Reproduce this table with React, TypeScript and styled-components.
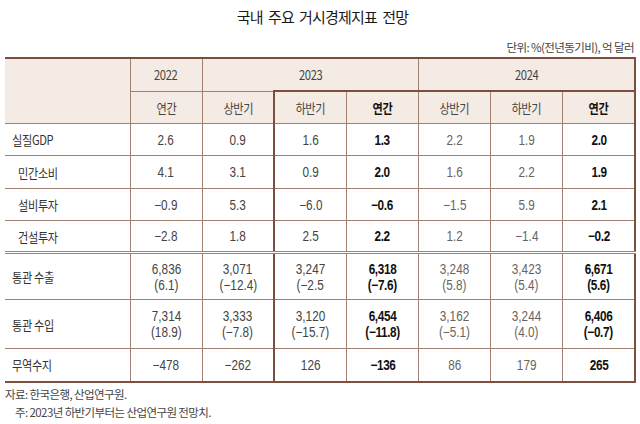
import React from "react";
import styled, { createGlobalStyle } from "styled-components";

const GlobalStyle = createGlobalStyle`
  html, body {
    margin: 0;
    padding: 0;
    background: #ffffff;
  }
  body {
    font-family: "Noto Sans CJK KR", "Noto Sans", sans-serif;
  }
`;

const THIN = "#a08070";
const THICK = "#7b4e3e";

type Row = {
  label: string;
  indent?: boolean;
  values: string[][];
  double?: boolean;
  height: number;
};

const rows: Row[] = [
  { label: "실질GDP", values: [["2.6"], ["0.9"], ["1.6"], ["1.3"], ["2.2"], ["1.9"], ["2.0"]], height: 32 },
  { label: "민간소비", indent: true, values: [["4.1"], ["3.1"], ["0.9"], ["2.0"], ["1.6"], ["2.2"], ["1.9"]], height: 33 },
  { label: "설비투자", indent: true, values: [["−0.9"], ["5.3"], ["−6.0"], ["−0.6"], ["−1.5"], ["5.9"], ["2.1"]], height: 32 },
  { label: "건설투자", indent: true, values: [["−2.8"], ["1.8"], ["2.5"], ["2.2"], ["1.2"], ["−1.4"], ["−0.2"]], height: 32, double: true },
  {
    label: "통관 수출",
    values: [["6,836", "(6.1)"], ["3,071", "(−12.4)"], ["3,247", "(−2.5"], ["6,318", "(−7.6)"], ["3,248", "(5.8)"], ["3,423", "(5.4)"], ["6,671", "(5.6)"]],
    height: 47,
  },
  {
    label: "통관 수입",
    values: [["7,314", "(18.9)"], ["3,333", "(−7.8)"], ["3,120", "(−15.7)"], ["6,454", "(−11.8)"], ["3,162", "(−5.1)"], ["3,244", "(4.0)"], ["6,406", "(−0.7)"]],
    height: 49,
  },
  { label: "무역수지", values: [["−478"], ["−262"], ["126"], ["−136"], ["86"], ["179"], ["265"]], height: 33 },
];

const halves = ["연간", "상반기", "하반기", "연간", "상반기", "하반기", "연간"];
const boldCols = [3, 6];

const App = () => {
  return (
    <Page>
      <GlobalStyle />
      <Title>국내&nbsp; 주요&nbsp; 거시경제지표&nbsp; 전망</Title>
      <Unit>단위: %(전년동기비), 억 달러</Unit>
      <Table>
        <colgroup>
          <col style={{ width: 125 }} />
          {halves.map((_, i) => (
            <col key={i} />
          ))}
        </colgroup>
        <thead>
          <tr>
            <Head rowSpan={2} $first />
            <Head>
              <Squeeze>2022</Squeeze>
            </Head>
            <Head colSpan={3}>
              <Squeeze>2023</Squeeze>
            </Head>
            <Head colSpan={3}>
              <Squeeze>2024</Squeeze>
            </Head>
          </tr>
          <tr>
            {halves.map((h, i) => (
              <Head key={i} $boxTop={i >= 2} $boxLeft={i === 2} $bold={boldCols.includes(i)}>
                <Squeeze>{h}</Squeeze>
              </Head>
            ))}
          </tr>
        </thead>
        <tbody>
          {rows.map((r) => (
            <BodyRow key={r.label} $h={r.height} $double={r.double}>
              <Label $indent={r.indent}>
                <Squeeze $left>{r.label}</Squeeze>
              </Label>
              {r.values.map((v, i) => (
                <Cell
                  key={i}
                  $boxLeft={i === 2}
                  $bold={boldCols.includes(i)}
                  $light={i === 4 || i === 5}
                >
                  {v.map((line, j) => (
                    <Line key={j}>
                      <Squeeze $amount={0.84}>{line}</Squeeze>
                    </Line>
                  ))}
                </Cell>
              ))}
            </BodyRow>
          ))}
        </tbody>
      </Table>
      <Notes>
        <Note>자료: 한국은행, 산업연구원.</Note>
        <Note $indent>주: 2023년 하반기부터는 산업연구원 전망치.</Note>
      </Notes>
    </Page>
  );
};

const Page = styled.div`
  width: 640px;
  height: 424px;
  box-sizing: border-box;
  padding: 7px 4px 0 5px;
  overflow: hidden;
`;

const Title = styled.div`
  text-align: center;
  font-size: 15px;
  line-height: 20px;
  color: #1a1a1a;
  letter-spacing: -0.8px;
  padding-left: 4px;
`;

const Unit = styled.div`
  margin-top: 12px;
  text-align: right;
  font-size: 11.5px;
  line-height: 16px;
  color: #444;
  letter-spacing: -0.6px;
  padding-right: 2px;
`;

const Table = styled.table`
  width: 631px;
  margin-top: 2px;
  border-collapse: collapse;
  table-layout: fixed;
  border-top: 2px solid ${THICK};
  border-bottom: 2px solid ${THICK};
  border-right: 2px solid ${THICK};
  font-family: "Liberation Sans", "Noto Sans CJK KR", sans-serif;
`;

const Squeeze = styled.span<{ $left?: boolean; $amount?: number }>`
  display: inline-block;
  white-space: nowrap;
  transform: scaleX(${(p) => p.$amount ?? 0.86});
  transform-origin: ${(p) => (p.$left ? "left center" : "center center")};
`;

const Head = styled.th<{ $boxTop?: boolean; $boxLeft?: boolean; $bold?: boolean; $first?: boolean }>`
  height: 31px;
  padding: 0;
  background: #f4ebe4;
  border: 1px solid ${THIN};
  border-left: ${(p) => (p.$first ? "none" : p.$boxLeft ? `2px solid ${THICK}` : `1px solid ${THIN}`)};
  border-top: ${(p) => (p.$boxTop ? `2px solid ${THICK}` : `1px solid ${THIN}`)};
  font-family: "Noto Sans CJK KR", sans-serif;
  font-size: 13px;
  font-weight: ${(p) => (p.$bold ? 700 : 400)};
  color: ${(p) => (p.$bold ? "#111" : "#444")};
  letter-spacing: -0.4px;
  text-align: center;
  vertical-align: middle;
`;

const BodyRow = styled.tr<{ $h: number; $double?: boolean }>`
  height: ${(p) => p.$h}px;
  & > td {
    border-bottom: ${(p) => (p.$double ? `3px double ${THIN}` : `1px solid ${THIN}`)};
  }
`;

const Label = styled.td<{ $indent?: boolean }>`
  padding: 0 0 0 ${(p) => (p.$indent ? 13 : 7)}px;
  border-left: none;
  border-right: 1px solid ${THIN};
  font-family: "Noto Sans CJK KR", sans-serif;
  font-size: 13px;
  color: #333;
  letter-spacing: -0.4px;
  text-align: left;
  vertical-align: middle;
`;

const Cell = styled.td<{ $boxLeft?: boolean; $bold?: boolean; $light?: boolean }>`
  padding: 0;
  border-left: ${(p) => (p.$boxLeft ? `2px solid ${THICK}` : `1px solid ${THIN}`)};
  border-right: 1px solid ${THIN};
  text-align: center;
  vertical-align: middle;
  font-size: 14px;
  line-height: 16px;
  font-weight: ${(p) => (p.$bold ? 700 : 400)};
  color: ${(p) => (p.$bold ? "#111" : p.$light ? "#6a6460" : "#444")};
  letter-spacing: ${(p) => (p.$bold ? "-0.4px" : "0")};
`;

const Line = styled.div``;

const Notes = styled.div`
  margin-top: 3px;
  display: flex;
  flex-direction: column;
  gap: 2px;
`;

const Note = styled.div<{ $indent?: boolean }>`
  padding-left: ${(p) => (p.$indent ? 10 : 0)}px;
  font-size: 11.5px;
  line-height: 16px;
  color: #444;
  letter-spacing: -0.6px;
`;

export default App;
